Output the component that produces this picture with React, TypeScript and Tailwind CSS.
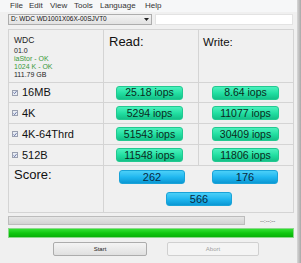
import React from "react";

const rows = [
  { label: "16MB", r: "25.18 iops", w: "8.64 iops", h: "h-[20px]" },
  { label: "4K", r: "5294 iops", w: "11077 iops", h: "h-[21px]" },
  { label: "4K-64Thrd", r: "51543 iops", w: "30409 iops", h: "h-[21px]" },
  { label: "512B", r: "11548 iops", w: "11806 iops", h: "h-[21px]" },
];

function Green({ text }: { text: string }) {
  return (
    <div className="w-[67px] h-[14px] shrink-0 rounded-[3px] border border-[#22c990] bg-gradient-to-b from-[#4af0bd] via-[#22e0a2] to-[#14c088] flex items-center justify-center text-[10.5px] leading-none text-[#0b2a20]">
      {text}
    </div>
  );
}

function Blue({ text }: { text: string }) {
  return (
    <div className="w-[66px] h-[14px] shrink-0 rounded-[3px] border border-[#1aa3d8] bg-gradient-to-b from-[#4ad0f8] via-[#20b8f0] to-[#0a98d4] flex items-center justify-center text-[11px] leading-none text-[#0a2a40]">
      {text}
    </div>
  );
}

function Check() {
  return (
    <div className="w-[6px] h-[6px] shrink-0 border border-[#9aa0b0] bg-[#e8ecf4] flex items-center justify-center">
      <svg width="5" height="5" viewBox="0 0 5 5">
        <path d="M0.6 2.5 L2 3.8 L4.4 0.8" stroke="#3a4a8a" strokeWidth="0.9" fill="none" />
      </svg>
    </div>
  );
}

export default function App() {
  return (
    <div className="w-[301px] h-[263px] flex bg-[#f0f0f0] overflow-hidden" style={{ fontFamily: '"Liberation Sans", Arial, sans-serif' }}>
      <div className="w-[297px] shrink-0 flex flex-col">
        {/* menu */}
        <div className="h-[12px] bg-[#f6f7f8] flex items-center text-[8px] text-[#333] leading-none">
          <span className="ml-[10px] w-[19px]">File</span>
          <span className="w-[21px]">Edit</span>
          <span className="w-[24px]">View</span>
          <span className="w-[26px]">Tools</span>
          <span className="w-[45px]">Language</span>
          <span>Help</span>
        </div>
        {/* selectors */}
        <div className="flex mt-[2px] ml-[8px] h-[11px] gap-[3px]">
          <div className="w-[144px] h-[11px] border border-[#adadad] bg-gradient-to-b from-[#f2f2f2] to-[#e2e2e2] flex items-center justify-between px-[2px] text-[6.5px] leading-none text-[#111]">
            <span>D: WDC WD1001X06X-00SJVT0</span>
            <svg width="5" height="3" viewBox="0 0 5 3"><path d="M0 0 H5 L2.5 3 Z" fill="#222" /></svg>
          </div>
          <div className="w-[138px] h-[11px] border border-[#e3e3e3] bg-white" />
        </div>
        {/* grid */}
        <div className="ml-[8px] mt-[4px] w-[286px] border border-[#d4d4d4] flex flex-col">
          <div className="flex h-[53px] border-b border-[#d4d4d4]">
            <div className="w-[95px] shrink-0 border-r border-[#d4d4d4] pl-[5px] pt-[5px] flex flex-col text-[7px] leading-[8px] text-[#222]">
              <span className="text-[8.5px] leading-[10px] mb-[2px]">WDC</span>
              <span>01.0</span>
              <span className="text-[#3a9a3a]">iaStor - OK</span>
              <span className="text-[#3a9a3a]">1024 K - OK</span>
              <span>111.79 GB</span>
            </div>
            <div className="w-[95px] shrink-0 border-r border-[#d4d4d4] pl-[5px] pt-[4px] text-[13px] leading-[16px] text-[#111]">Read:</div>
            <div className="flex-1 pl-[4px] pt-[4px] text-[11.5px] leading-[16px] text-[#111]">Write:</div>
          </div>
          {rows.map((r) => (
            <div key={r.label} className={`flex ${r.h} border-b border-[#d4d4d4]`}>
              <div className="w-[95px] shrink-0 border-r border-[#d4d4d4] flex items-center pl-[3px] gap-[4px] text-[11px] text-[#111]">
                <Check />
                <span>{r.label}</span>
              </div>
              <div className="w-[95px] shrink-0 border-r border-[#d4d4d4] flex items-center pl-[12px]">
                <Green text={r.r} />
              </div>
              <div className="flex-1 flex items-center pl-[13px]">
                <Green text={r.w} />
              </div>
            </div>
          ))}
          <div className="grid grid-cols-[95px_95px_94px] grid-rows-[20px_26px] h-[46px]">
            <div className="row-span-2 border-r border-[#d4d4d4] pl-[5px] pt-[1px] text-[13px] leading-[16px] text-[#111]">Score:</div>
            <div className="pl-[15px] pt-[4px]"><Blue text="262" /></div>
            <div className="pl-[13px] pt-[4px]"><Blue text="176" /></div>
            <div className="col-span-2 pl-[62px] pt-[6px]"><Blue text="566" /></div>
          </div>
        </div>
        {/* progress */}
        <div className="flex items-center ml-[8px] mt-[3px] h-[9px]">
          <div className="w-[237px] h-[9px] border border-[#bcbcbc] bg-gradient-to-b from-[#e6e6e6] to-[#d2d2d2]" />
          <span className="ml-[15px] text-[6px] leading-none text-[#444]">--:--:--</span>
        </div>
        <div className="ml-[8px] mt-[3px] w-[286px] h-[10px] border border-[#8ad88a] bg-gradient-to-b from-[#30e030] via-[#10c810] to-[#08b008]" />
        <div className="flex mt-[4px] h-[14px]">
          <div className="ml-[53px] w-[94px] h-[14px] border border-[#acacac] rounded-[2px] bg-gradient-to-b from-[#f4f4f4] to-[#e0e0e0] flex items-center justify-center text-[6px] text-[#222]">Start</div>
          <div className="ml-[20px] w-[92px] h-[14px] border border-[#d0d0d0] rounded-[2px] bg-[#f4f4f4] flex items-center justify-center text-[6px] text-[#a0a0a0]">Abort</div>
        </div>
      </div>
      <div className="w-[4px] h-full bg-gradient-to-r from-[#d8d8d8] to-[#a8a8a8]" />
    </div>
  );
}
